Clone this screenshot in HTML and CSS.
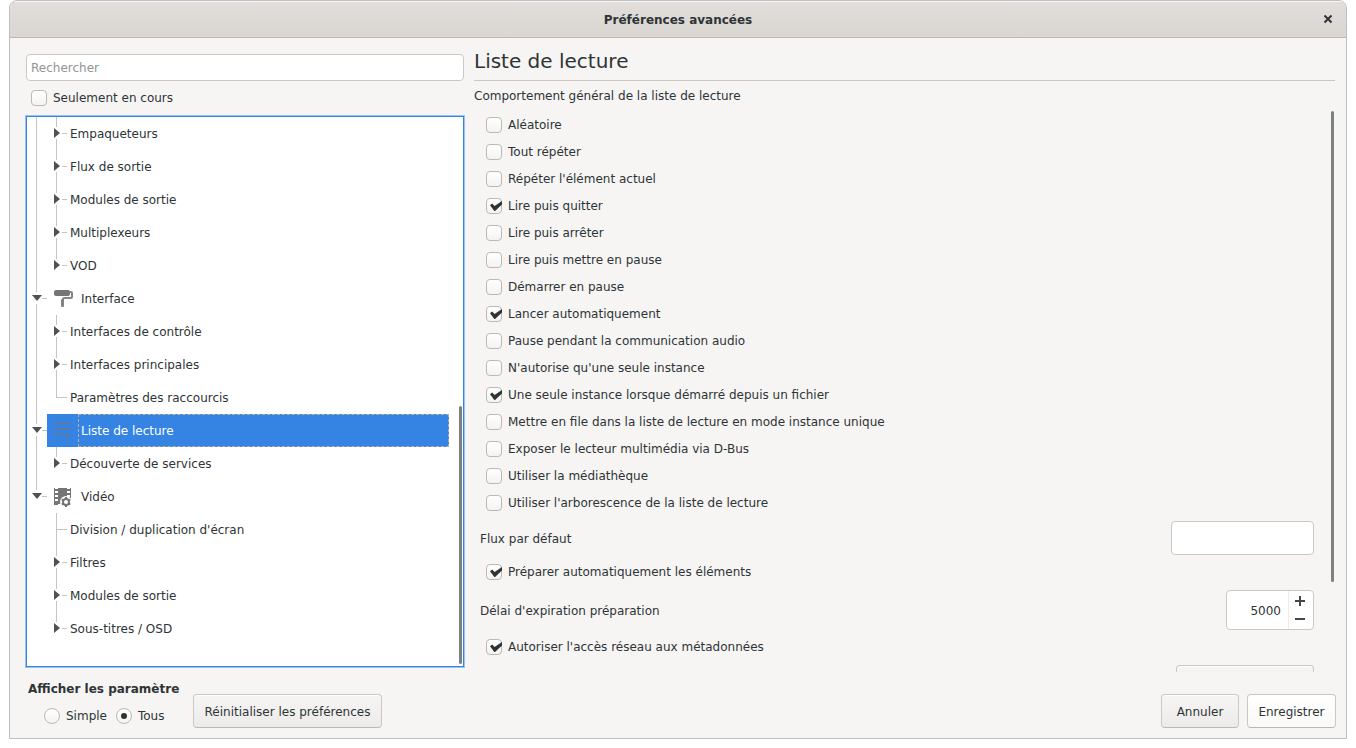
FILE: index.html
```html
<!DOCTYPE html>
<html lang="fr">

<head>
    <meta charset="UTF-8">
    <meta name="viewport" content="width=device-width, initial-scale=1.0">
    <title>Préférences avancées</title>
    <link rel="stylesheet" href="styles.css">
</head>

<body>
    <!-- tree guides and expanders -->
    <svg class="defs" aria-hidden="true">
        <symbol id="pass" viewBox="0 0 20 33">
            <path class="line" d="M9 0h1v33h-1z" />
        </symbol>
        <symbol id="open" viewBox="0 0 20 33">
            <path class="line" d="M9 0h1v10h-1zM9 22h1v11h-1zM15 16h5v1h-5z" />
            <path class="arrow" d="M5 13h10l-5 6z" />
        </symbol>
        <symbol id="open-last" viewBox="0 0 20 33">
            <path class="line" d="M9 0h1v10h-1zM15 16h5v1h-5z" />
            <path class="arrow" d="M5 13h10l-5 6z" />
        </symbol>
        <symbol id="closed" viewBox="0 0 20 33">
            <path class="line" d="M9 0h1v10h-1zM9 22h1v11h-1zM15 16h5v1h-5z" />
            <path class="arrow" d="M7 11v10l6 -5z" />
        </symbol>
        <symbol id="closed-last" viewBox="0 0 20 33">
            <path class="line" d="M9 0h1v10h-1zM15 16h5v1h-5z" />
            <path class="arrow" d="M7 11v10l6 -5z" />
        </symbol>
        <symbol id="leaf" viewBox="0 0 20 33">
            <path class="line" d="M9 0h1v33h-1zM10 16h10v1h-10z" />
        </symbol>
        <symbol id="leaf-last" viewBox="0 0 20 33">
            <path class="line" d="M9 0h1v17h-1zM10 16h10v1h-10z" />
        </symbol>
    </svg>

    <div class="window">
        <header class="titlebar">
            <h2>Préférences avancées</h2>
            <button class="close" type="button" aria-label="Fermer">
                <svg width="10" height="10" viewBox="0 0 10 10"><path d="M1.500 1.500l7 7M8.500 1.500l-7 7" /></svg>
            </button>
        </header>

        <main class="panes">
            <section class="side">
                <input class="entry search" type="text" placeholder="Rechercher" aria-label="Rechercher">
                <label class="check only"><input type="checkbox">Seulement en cours</label>
                <div class="tree-box">
                    <ul class="tree">
                        <li><svg class="guide"><use href="#pass" /></svg><svg class="guide"><use href="#closed" /></svg><span>Empaqueteurs</span></li>
                        <li><svg class="guide"><use href="#pass" /></svg><svg class="guide"><use href="#closed" /></svg><span>Flux de sortie</span></li>
                        <li><svg class="guide"><use href="#pass" /></svg><svg class="guide"><use href="#closed" /></svg><span>Modules de sortie</span></li>
                        <li><svg class="guide"><use href="#pass" /></svg><svg class="guide"><use href="#closed" /></svg><span>Multiplexeurs</span></li>
                        <li><svg class="guide"><use href="#pass" /></svg><svg class="guide"><use href="#closed-last" /></svg><span>VOD</span></li>
                        <li><svg class="guide"><use href="#open" /></svg>
                            <div class="group">
                                <svg class="icon" viewBox="0 0 20 21">
                                    <rect x="0" y="2" width="16" height="6" rx="2" />
                                    <path class="arm" d="M15 4h2q1 0 1 1v4q0 1 -1 1h-7q-1 0 -1 1v2" />
                                    <rect class="stem" x="7" y="11" width="3" height="8" rx="1" />
                                </svg>
                                <span>Interface</span>
                            </div>
                        </li>
                        <li><svg class="guide"><use href="#pass" /></svg><svg class="guide"><use href="#closed" /></svg><span>Interfaces de contrôle</span></li>
                        <li><svg class="guide"><use href="#pass" /></svg><svg class="guide"><use href="#closed" /></svg><span>Interfaces principales</span></li>
                        <li><svg class="guide"><use href="#pass" /></svg><svg class="guide"><use href="#leaf-last" /></svg><span>Paramètres des raccourcis</span></li>
                        <li><svg class="guide"><use href="#open" /></svg>
                            <div class="group selected">
                                <svg class="icon" viewBox="0 0 20 21">
                                    <path d="M0 2h17v2h-17zM0 8h17v2h-17zM0 13h10v2h-10zM12 12l5 4l-5 3z" />
                                </svg>
                                <span>Liste de lecture</span>
                            </div>
                        </li>
                        <li><svg class="guide"><use href="#pass" /></svg><svg class="guide"><use href="#closed-last" /></svg><span>Découverte de services</span></li>
                        <li><svg class="guide"><use href="#open-last" /></svg>
                            <div class="group">
                                <svg class="icon" viewBox="0 0 20 21">
                                    <path fill-rule="evenodd" d="M0 2h1v1h3v-1h9v1h3v-1h1v17h-1v-1h-12v1h-4zM1 5v2h3v-2zM1 9v2h3v-2zM1 13v2h3v-2zM13 5v2h3v-2zM13 9v2h3v-2z" />
                                    <circle class="gap" cx="12" cy="16" r="6" />
                                    <circle class="cog" cx="12" cy="16" r="3" />
                                    <path class="teeth" d="M12 11v2M12 19v2M7.700 13.500l1.700 1M14.600 17.500l1.700 1M7.700 18.500l1.700 -1M14.600 14.500l1.700 -1" />
                                </svg>
                                <span>Vidéo</span>
                            </div>
                        </li>
                        <li><svg class="guide"></svg><svg class="guide"><use href="#leaf" /></svg><span>Division / duplication d'écran</span></li>
                        <li><svg class="guide"></svg><svg class="guide"><use href="#closed" /></svg><span>Filtres</span></li>
                        <li><svg class="guide"></svg><svg class="guide"><use href="#closed" /></svg><span>Modules de sortie</span></li>
                        <li><svg class="guide"></svg><svg class="guide"><use href="#closed-last" /></svg><span>Sous-titres / OSD</span></li>
                    </ul>
                    <div class="thumb"></div>
                </div>
            </section>

            <section class="content">
                <h1>Liste de lecture</h1>
                <p>Comportement général de la liste de lecture</p>
                <div class="options-box">
                    <div class="options">
                        <div class="checks">
                            <label class="check"><input type="checkbox">Aléatoire</label>
                            <label class="check"><input type="checkbox">Tout répéter</label>
                            <label class="check"><input type="checkbox">Répéter l'élément actuel</label>
                            <label class="check"><input type="checkbox" checked>Lire puis quitter</label>
                            <label class="check"><input type="checkbox">Lire puis arrêter</label>
                            <label class="check"><input type="checkbox">Lire puis mettre en pause</label>
                            <label class="check"><input type="checkbox">Démarrer en pause</label>
                            <label class="check"><input type="checkbox" checked>Lancer automatiquement</label>
                            <label class="check"><input type="checkbox">Pause pendant la communication audio</label>
                            <label class="check"><input type="checkbox">N'autorise qu'une seule instance</label>
                            <label class="check"><input type="checkbox" checked>Une seule instance lorsque démarré depuis un fichier</label>
                            <label class="check"><input type="checkbox">Mettre en file dans la liste de lecture en mode instance unique</label>
                            <label class="check"><input type="checkbox">Exposer le lecteur multimédia via D-Bus</label>
                            <label class="check"><input type="checkbox">Utiliser la médiathèque</label>
                            <label class="check"><input type="checkbox">Utiliser l'arborescence de la liste de lecture</label>
                        </div>
                        <div class="field">
                            <label for="flux">Flux par défaut</label>
                            <input class="entry" type="text" id="flux">
                        </div>
                        <label class="check"><input type="checkbox" checked>Préparer automatiquement les éléments</label>
                        <div class="field">
                            <label for="delai">Délai d'expiration préparation</label>
                            <div class="spin">
                                <input type="number" id="delai" value="5000">
                                <div class="steps">
                                    <button type="button" aria-label="Augmenter"><svg width="10" height="10" viewBox="0 0 10 10"><path d="M4 0h2v4h4v2h-4v4h-2v-4h-4v-2h4z" /></svg></button>
                                    <button type="button" aria-label="Diminuer"><svg width="10" height="10" viewBox="0 0 10 10"><path d="M0 4h10v2h-10z" /></svg></button>
                                </div>
                            </div>
                        </div>
                        <label class="check"><input type="checkbox" checked>Autoriser l'accès réseau aux métadonnées</label>
                        <div class="field">
                            <button class="btn combo" type="button" aria-label="Choisir"></button>
                        </div>
                    </div>
                    <div class="thumb"></div>
                </div>
            </section>
        </main>

        <footer class="actions">
            <fieldset class="show">
                <legend>Afficher les paramètre</legend>
                <label class="radio"><input type="radio" name="show">Simple</label>
                <label class="radio"><input type="radio" name="show" checked>Tous</label>
            </fieldset>
            <button class="btn reset" type="button">Réinitialiser les préférences</button>
            <button class="btn cancel" type="button">Annuler</button>
            <button class="btn save" type="button">Enregistrer</button>
        </footer>
    </div>
</body>

</html>
```
FILE: styles.css
```css
* {
    margin: 0;
    padding: 0;
    box-sizing: border-box;
}

body {
    height: 100vh;
    padding: 0 9px 9px;
    background: #fff;
    color: #2e3436;
    font: 12px/16px "DejaVu Sans", sans-serif;
}

input,
button {
    font: inherit;
    color: inherit;
}

.defs {
    position: absolute;
    width: 0;
    height: 0;
}

.window {
    display: flex;
    flex-direction: column;
    height: 100%;
    border: 1px solid #bfbfbf;
    border-radius: 8px 8px 0 0;
    background: #f6f5f4;
    overflow: hidden;
}

.titlebar {
    display: grid;
    grid-template-columns: 36px 1fr 36px;
    align-items: center;
    height: 37px;
    border-bottom: 1px solid #bfb8b1;
    background: linear-gradient(#e1dedb, #dad6d2);
    box-shadow: inset 0 1px #f9f8f8;
}

.titlebar h2 {
    grid-column: 2;
    padding-top: 2px;
    font-size: 12px;
    text-align: center;
}

.close {
    display: flex;
    align-items: center;
    justify-content: center;
    height: 36px;
    border: 0;
    background: none;
}

.close path {
    stroke: #2e3436;
    stroke-width: 2;
}

.panes {
    flex: 1;
    display: grid;
    grid-template-columns: 438px 1fr;
    grid-template-rows: minmax(0, 1fr);
    gap: 10px;
    min-height: 0;
    padding: 0 11px 0 16px;
}

/* left pane */
.side {
    display: flex;
    flex-direction: column;
    padding: 16px 0 5px;
    min-height: 0;
}

.entry {
    border: 1px solid #cdc7c2;
    border-radius: 4px;
    background: #fff;
    padding: 0 4px;
}

.search {
    height: 27px;
}

.search::placeholder {
    color: #929595;
    opacity: 1;
}

.check {
    display: flex;
    align-items: center;
    gap: 6px;
    height: 27px;
    padding: 0 0 1px 12px;
}

.only {
    height: 35px;
    padding-left: 5px;
}

.check input,
.radio input {
    appearance: none;
    flex: none;
    width: 16px;
    height: 16px;
    border: 1px solid #bfb8b1;
    border-radius: 4px;
    background: linear-gradient(#fff, #f4f3f2);
}

.check input:checked::before {
    content: "";
    display: block;
    width: 12px;
    height: 10px;
    margin: 2px 0 0 3px;
    background: #2e3436;
    clip-path: polygon(0 42%, 18% 26%, 38% 50%, 100% 0, 100% 34%, 42% 100%, 36% 100%);
}

.tree-box {
    position: relative;
    flex: 1;
    min-height: 0;
    border: 1px solid #3584e4;
    background: #fff;
    box-shadow: 0 0 0 1px #9ac2f2;
}

.tree {
    height: 100%;
    overflow: hidden;
    list-style: none;
}

.tree li {
    display: flex;
    align-items: center;
    height: 33px;
    padding-right: 14px;
}

.tree li > span {
    padding-left: 3px;
}

.guide {
    flex: none;
    width: 20px;
    height: 33px;
}

.line {
    fill: #c4c4c4;
}

.arrow {
    fill: #4c5356;
}

.group {
    flex: 1;
    display: flex;
    align-items: center;
    gap: 4px;
    height: 33px;
    padding-left: 7px;
}

.group span {
    flex: 1;
    height: 33px;
    padding: 8px 2px 7px;
    border: 1px solid transparent;
}

.selected {
    background: #3584e4;
    color: #fff;
}

.selected span {
    border: 1px dashed #b3ada3;
}

.icon {
    flex: none;
    width: 20px;
    height: 21px;
    fill: #757575;
}

.selected .icon {
    fill: #5a7ba5;
}

.arm,
.teeth,
.cog {
    fill: none;
    stroke: #757575;
    stroke-width: 2;
}

.arm {
    stroke: #858585;
}

.stem {
    fill: #858585;
}

.gap {
    fill: #fff;
}

.thumb {
    position: absolute;
    width: 3px;
    border-radius: 2px;
    background: #7e8182;
}

.tree-box .thumb {
    right: 1px;
    bottom: 2px;
    height: 47%;
}

/* right pane */
.content {
    display: flex;
    flex-direction: column;
    min-height: 0;
}

h1 {
    height: 43px;
    padding-top: 11px;
    border-bottom: 1px solid #cdc7c2;
    font-size: 20px;
    font-weight: normal;
    line-height: 24px;
}

.content p {
    padding: 7px 0;
}

.options-box {
    position: relative;
    flex: 1;
    min-height: 0;
}

.options {
    display: flex;
    flex-direction: column;
    gap: 4px;
    height: 100%;
    padding: 1px 21px 0 0;
    overflow: hidden;
}

.options > * {
    flex: none;
}

.options-box .thumb {
    top: 0;
    right: 1px;
    height: 84%;
}

.field {
    display: flex;
    align-items: center;
    justify-content: space-between;
    padding-left: 6px;
}

.field label {
    padding-top: 2px;
}

.field .entry {
    width: 143px;
    height: 34px;
}

.spin {
    display: flex;
    width: 88px;
    height: 40px;
    border: 1px solid #cdc7c2;
    border-radius: 4px;
    background: #fff;
}

.spin input {
    appearance: textfield;
    flex: 1;
    min-width: 0;
    padding: 2px 7px 0 0;
    border: 0;
    background: none;
    text-align: right;
}

.spin input::-webkit-inner-spin-button {
    display: none;
}

.steps {
    display: flex;
    flex-direction: column;
    width: 25px;
    padding: 1px 2px 1px 0;
    border-left: 1px solid #f6e9e2;
}

.steps button {
    flex: 1;
    display: flex;
    align-items: center;
    justify-content: center;
    border: 0;
    background: none;
    fill: #43494b;
}

.btn {
    height: 34px;
    padding: 2px 10px 0;
    border: 1px solid #cdc7c2;
    border-bottom-color: #bfb8b1;
    border-radius: 4px;
    background: linear-gradient(#f6f5f4, #edebe9);
    box-shadow: inset 0 1px #fff;
}

.combo {
    width: 138px;
    margin-left: auto;
}

/* footer */
.actions {
    display: flex;
    align-items: flex-end;
    gap: 8px;
    height: 66px;
    padding: 0 10px 10px 18px;
}

.show {
    display: flex;
    gap: 9px;
    width: 157px;
    padding-left: 16px;
    border: 0;
}

.show legend {
    margin-left: -16px;
    padding-bottom: 10px;
    font-weight: bold;
    white-space: nowrap;
}

.radio {
    display: flex;
    align-items: center;
    gap: 6px;
    height: 18px;
    margin-bottom: 3px;
}

.radio input {
    border-radius: 50%;
}

.radio input:checked::before {
    content: "";
    display: block;
    width: 6px;
    height: 6px;
    margin: 4px;
    border-radius: 50%;
    background: #2e3436;
}

.reset {
    width: 189px;
}

.cancel {
    width: 78px;
    margin-left: auto;
}

.save {
    width: 89px;
    background: linear-gradient(#fff, #f9f9f8);
}
```
